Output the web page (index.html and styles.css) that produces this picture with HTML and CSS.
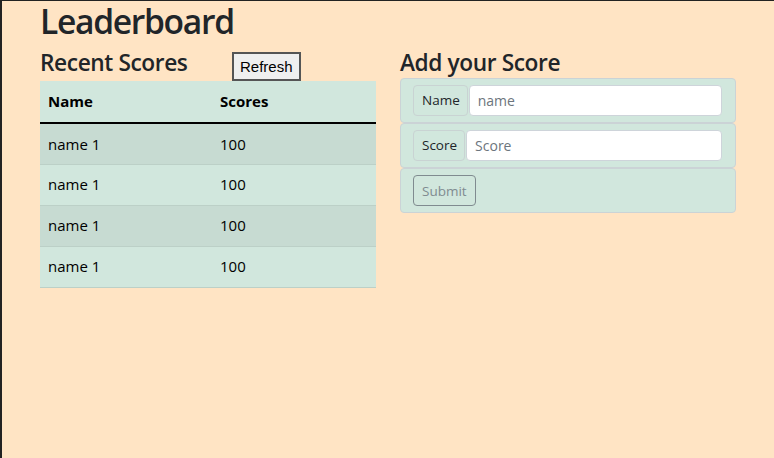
FILE: index.html
```html
<!DOCTYPE html>
<html lang="en">
<head>
<meta charset="utf-8">
<title>Leaderboard</title>
<link rel="stylesheet" href="styles.css">
</head>
<body>
<div class="container">
  <h1 class="title">Leaderboard</h1>
  <div class="columns">
    <section class="col">
      <div class="col-head">
        <h4 class="subtitle">Recent Scores</h4>
        <button class="refresh" type="button">Refresh</button>
      </div>
      <table class="scores">
        <thead>
          <tr><th class="c-name">Name</th><th>Scores</th></tr>
        </thead>
        <tbody>
          <tr class="odd"><td>name 1</td><td>100</td></tr>
          <tr><td>name 1</td><td>100</td></tr>
          <tr class="odd"><td>name 1</td><td>100</td></tr>
          <tr><td>name 1</td><td>100</td></tr>
        </tbody>
      </table>
    </section>
    <section class="col">
      <div class="col-head">
        <h4 class="subtitle">Add your Score</h4>
      </div>
      <form class="score-form">
        <div class="form-box">
          <div class="input-group">
            <span class="addon">Name</span>
            <input class="field" type="text" placeholder="name">
          </div>
        </div>
        <div class="form-box">
          <div class="input-group">
            <span class="addon">Score</span>
            <input class="field" type="text" placeholder="Score">
          </div>
        </div>
        <div class="form-box">
          <button class="submit" type="button" disabled>Submit</button>
        </div>
      </form>
    </section>
  </div>
</div>
</body>
</html>
```

FILE: styles.css
```css
* { box-sizing: border-box; }

html {
  background: #ffe4c4;
}

body {
  margin: 0;
  min-height: 100vh;
  border-top: 1px solid #222;
  border-left: 2px solid #222;
  background: #ffe4c4;
  color: #212529;
  font-family: "Open Sans", "Noto Sans", sans-serif;
  font-size: 16px;
  line-height: 1.5;
}

.container {
  width: 720px;
  margin: 0 auto;
  padding: 0 12px;
}

.title {
  margin: 0 0 8px;
  font-size: 33.6px;
  line-height: 40px;
  font-weight: 600;
  letter-spacing: -1.3px;
}

.columns {
  display: flex;
  gap: 24px;
}

.col {
  width: 336px;
  flex: none;
}

.col-head {
  display: flex;
  align-items: flex-start;
  height: 32px;
}

.subtitle {
  margin: 0;
  width: 192px;
  font-size: 22.7px;
  line-height: 27px;
  font-weight: 600;
  letter-spacing: -0.4px;
}

.refresh {
  margin-top: 3px;
  height: 29px;
  padding: 0 6px;
  border: 2px solid #555;
  background: #efefef;
  color: #000;
  font-family: "Liberation Sans", Arial, sans-serif;
  font-size: 15px;
}

.scores {
  width: 336px;
  border-collapse: collapse;
  color: #000;
  background: #d1e7dd;
  font-size: 15px;
}

.scores th,
.scores td {
  text-align: left;
  padding: 8px;
  height: 41px;
  border-bottom: 1px solid #bcd0c7;
}

.scores th {
  height: 42px;
  font-weight: 700;
  border-bottom: 2px solid #000;
}

.scores .c-name {
  width: 172px;
}

.scores .odd {
  background: #c7dbd2;
}

.score-form {
  display: flex;
  flex-direction: column;
  margin-top: -3px;
}

.form-box {
  height: 45px;
  padding: 6px 13px 0 12px;
  background: #d1e7dd;
  border: 1px solid #cbd3d6;
  border-radius: 4px;
}

.input-group {
  display: flex;
  gap: 1px;
  height: 31px;
}

.addon {
  display: flex;
  align-items: center;
  padding: 0 7px 0 8px;
  border: 1px solid #c9d3d3;
  border-radius: 4px;
  font-size: 13.5px;
  color: #212529;
}

.field {
  flex: 1;
  min-width: 0;
  height: 31px;
  padding: 0 8px;
  border: 1px solid #ced4da;
  border-radius: 4px;
  background: #fff;
  font-family: inherit;
  font-size: 14px;
  color: #212529;
}

.field::placeholder {
  color: #6c757d;
}

.submit {
  height: 31px;
  padding: 0 8px;
  border: 1px solid #6c757d;
  border-radius: 4px;
  background: transparent;
  color: #6c757d;
  opacity: 0.8;
  font-family: inherit;
  font-size: 13.5px;
}
```
